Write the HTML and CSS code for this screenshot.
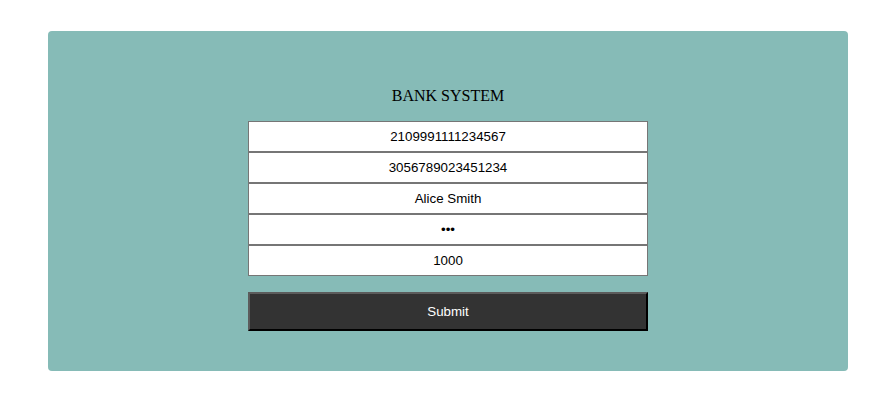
FILE: index.html
```html
<!DOCTYPE html>
<html>
<head>
<meta charset="utf-8">
<link rel="stylesheet" href="styles.css">
</head>
<body>
<div class="card">
  <div class="title">BANK SYSTEM</div>
  <form class="form">
    <input class="field" type="text" value="2109991111234567">
    <input class="field" type="text" value="3056789023451234">
    <input class="field" type="text" value="Alice Smith">
    <input class="field" type="password" value="123">
    <input class="field" type="text" value="1000">
    <button class="submit" type="button">Submit</button>
  </form>
</div>
</body>
</html>
```

FILE: styles.css
```css
html, body {
  margin: 0;
  padding: 0;
  background: #ffffff;
}
body {
  padding: 31px 0 0 48px;
}
.card {
  width: 800px;
  box-sizing: border-box;
  background: #86bbb7;
  border-radius: 4px;
  padding: 56px 0 40px;
  display: flex;
  flex-direction: column;
  align-items: center;
}
.title {
  font-family: "Liberation Serif", "Times New Roman", serif;
  font-size: 16px;
  line-height: 18px;
  color: #000;
  margin-bottom: 16px;
}
.form {
  display: flex;
  flex-direction: column;
  width: 400px;
  margin: 0;
}
.field {
  display: block;
  box-sizing: border-box;
  width: 400px;
  height: 31px;
  margin: 0;
  padding: 0 2px;
  border: 1px solid #767676;
  background: #fff;
  font-family: "Liberation Sans", Arial, sans-serif;
  font-size: 13.33px;
  color: #000;
  text-align: center;
  outline: none;
}
.submit {
  margin-top: 16px;
  box-sizing: border-box;
  width: 400px;
  height: 39px;
  background: #333333;
  color: #ffffff;
  border: 2px solid;
  border-color: #5c5c5c #000000 #000000 #5c5c5c;
  font-family: "Liberation Sans", Arial, sans-serif;
  font-size: 13.33px;
  padding: 0;
}
```
